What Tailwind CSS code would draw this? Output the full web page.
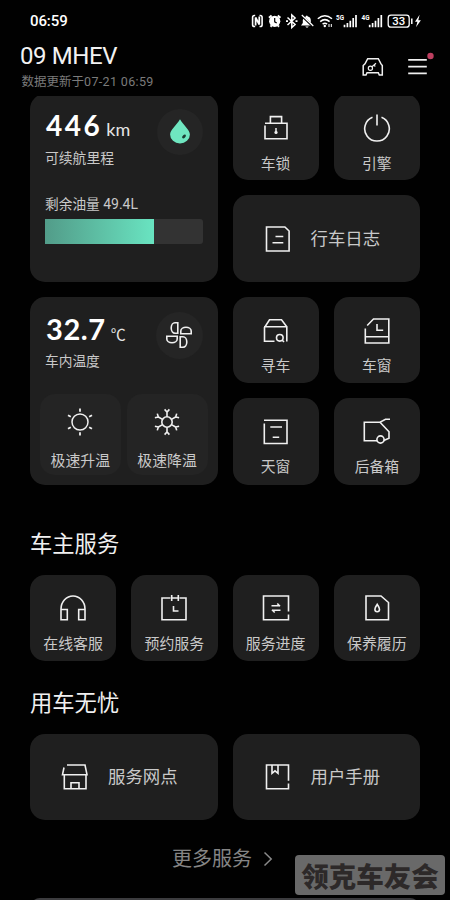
<!DOCTYPE html>
<html lang="zh-CN">
<head>
<meta charset="utf-8">
<meta name="viewport" content="width=device-width, initial-scale=1">
<title>09 MHEV</title>
<script src="https://cdn.jsdelivr.net/npm/@tailwindcss/browser@4"></script>
</head>
<body class="bg-black">
<div class="relative flex h-[900px] w-[450px] flex-col overflow-hidden bg-[#010101] font-[Roboto,'Noto_Sans_CJK_SC',sans-serif] text-[#c9c9c9]">

  <!-- status bar -->
  <div class="flex h-[42px] shrink-0 items-center justify-between pl-[30px] pr-[27px] text-white">
    <span class="text-[15px] font-medium leading-[42px] tracking-[-0.1px]">06:59</span>
    <svg class="h-[20px] w-[172px]" viewBox="252 11 172 20" fill="none" stroke="#fff">
      <!-- nfc -->
      <path d="M256.200 15.500h-.8q-1.800 0-1.800 1.800v7.400q0 1.800 1.800 1.800h.8M260.500 15.500h.8q1.800 0 1.800 1.800v7.400q0 1.800-1.800 1.800h-.8" stroke-width="1.600"/>
      <path d="M256.600 25.500V17.500l3.700 7V16.500" stroke-width="1.800"/>
      <!-- alarm -->
      <circle cx="275.700" cy="21.300" r="5.600" fill="#fff" stroke="none"/>
      <path d="M270 17.800l2.600-2.300M281.400 17.800l-2.600-2.300M271.500 26.800l1-1M280 26.800l-1-1" stroke-width="2"/>
      <path d="M275.700 18v3.800l2 1.200" stroke="#000" stroke-width="1.200"/>
      <!-- bluetooth -->
      <path d="M288.500 17.500l7.600 7-3.300 3V15l3.300 3-7.600 7" stroke-width="1.500"/>
      <path d="M287 21.200h2M296.500 21.200h2" stroke-width="1.700"/>
      <!-- muted bell -->
      <path d="M302 25.500l1.800-2.500v-3q.5-3 3-3.600 1-1.600 2 0 3 .6 3 4v2.600l2 2.500zM306.300 26.400h3.400q-1.500 2.400-3.400 0z" fill="#fff" stroke="none"/>
      <path d="M302.500 15.500l12 11.500" stroke="#000" stroke-width="2.400"/>
      <path d="M302.800 15l11.500 11" stroke-width="1.200"/>
      <!-- wifi -->
      <path d="M318.800 18.800q7-6.200 14.200 0M321.200 21.600q4.700-4 9.400 0M323.600 24.100q2.300-1.800 4.500 0" stroke-width="1.500"/>
      <circle cx="325.800" cy="26" r="1.200" fill="#fff" stroke="none"/>
      <path d="M330 24v3M332.300 24v3" stroke-width="1"/>
      <!-- signal bars -->
      <path d="M345.500 27.200v-2.400M348.400 27.200V23M351.300 27.200v-6.400M354.200 27.200v-9.200M357 27.200V15M370.700 27.200v-2.400M373.600 27.200V23M376.500 27.200v-6.400M379.400 27.200v-9.200M382.300 27.200V15" stroke-width="1.700"/>
      <text x="337" y="20" font-size="7" font-weight="700" fill="#fff" stroke="none" textLength="8" lengthAdjust="spacingAndGlyphs">5G</text>
      <text x="362.500" y="20" font-size="7" font-weight="700" fill="#fff" stroke="none" textLength="8" lengthAdjust="spacingAndGlyphs">4G</text>
      <!-- battery -->
      <rect x="389.200" y="15.200" width="21" height="12" rx="2.800" stroke-width="1.300"/>
      <path d="M412.800 18.500v5.500" stroke-width="1.500"/>
      <text x="393.200" y="25.100" font-size="11" font-weight="500" fill="#fff" stroke="none" textLength="13" lengthAdjust="spacingAndGlyphs">33</text>
      <path d="M420.600 14.800l-4.600 7h2.400l-1.400 5.500 4.900-7h-2.600z" fill="#fff" stroke="none"/>
    </svg>
  </div>

  <!-- vehicle header -->
  <header class="flex h-[54px] shrink-0 items-start justify-between pl-[20px] pr-[16px]">
    <div>
      <h1 class="text-[24px] font-normal leading-[28px] tracking-[-0.400px] text-[#f2f2f2]">09 MHEV</h1>
      <p class="pl-[1.500px] pt-[3px] text-[12.500px] leading-[18px] text-[#7b7b7b]">数据更新于<span class="tracking-[0.350px]">07-21 06:59</span></p>
    </div>
    <svg class="mt-[8px] h-[34px] w-[74px]" viewBox="360 50 74 34" fill="none" stroke="#f0f0f0" stroke-width="1.500">
      <path d="M363.200 75V65.500l1.800-1.600 2.700-5.200h10.600l2.700 5.200 1.300 1.600V75h-3l-1-2.200H367l-1 2.200z"/>
      <circle cx="370.400" cy="68.300" r="2.100" stroke-width="1.200"/>
      <path d="M372 66.800l4-3.600M374 65.200l1.300 1.300" stroke-width="1.200"/>
      <path d="M408.200 59.900h18.600M408.200 66.600h18.600M408.200 73.300h18.600" stroke-width="1.700"/>
      <circle cx="430.500" cy="56" r="3.200" fill="#bd3f60" stroke="none"/>
    </svg>
  </header>

  <main class="h-[804px] shrink-0 overflow-hidden px-[30px]">
    <!-- dashboard -->
    <section class="-mt-[2px] grid grid-cols-[187.500px_86.250px_86.250px] grid-rows-[86.400px_86.400px_86.400px_86.400px] gap-[15px]">
      <article class="row-span-2 rounded-[15px] bg-[#1f1f1f] px-[15px] pt-[15px]">
        <div class="flex justify-between">
          <div>
            <div class="flex items-baseline pl-px font-[Lato,sans-serif] leading-[33px] text-white"><span class="text-[28px] font-bold tracking-[2.500px]">446</span><span class="ml-[4px] text-[18px] text-[#e4e4e4]">km</span></div>
            <p class="mt-[2px] text-[13.800px] leading-[20px]">可续航里程</p>
          </div>
          <div class="flex size-[46px] items-center justify-center rounded-full bg-[#252525]">
            <svg class="size-[28px]" viewBox="0 0 28 28"><path d="M14 1.200C17.500 7 23.900 12 23.900 16.500A9.900 9 0 0 1 4.100 16.500C4.100 12 10.500 7 14 1.200z" fill="#6fe6c0"/><ellipse cx="18" cy="18.400" rx="2.300" ry="1.400" transform="rotate(-45 18 18.400)" fill="#1d3a31"/></svg>
          </div>
        </div>
        <p class="mt-[25px] text-[13.700px] leading-[22px]">剩余油量 <span class="text-[14px]">49.4L</span></p>
        <div class="mt-[4px] h-[25px] overflow-hidden rounded-r-[3px] bg-[#333]"><div class="h-full bg-linear-to-r from-[#529c89] to-[#69e4c1]" style="width:69%"></div></div>
      </article>

      <button class="flex flex-col items-center rounded-[15px] bg-[#1f1f1f] pt-[20px]">
        <svg class="size-[28px]" viewBox="0 0 28 28" fill="none" stroke="#f0f0f0" stroke-width="1.600"><path d="M3 9.200h22v15.600H3V11.500M8.400 9V2.600h11.200V9"/><path d="M14 14v3" stroke-width="1.500"/><circle cx="14" cy="18.400" r="1.600" fill="#f0f0f0" stroke="none"/></svg>
        <span class="mt-[10.500px] text-[14.800px] leading-[22px]">车锁</span>
      </button>
      <button class="flex flex-col items-center rounded-[15px] bg-[#1f1f1f] pt-[20px]">
        <svg class="size-[28px]" viewBox="0 0 28 28" fill="none" stroke="#f0f0f0" stroke-width="1.600"><path d="M9.500 3.300A12.300 12.300 0 1 0 18.500 3.300M14 .5v11"/></svg>
        <span class="mt-[10.500px] text-[14.800px] leading-[22px]">引擎</span>
      </button>
      <button class="col-span-2 flex items-center rounded-[15px] bg-[#1f1f1f] pl-[31px]">
        <svg class="size-[28px]" viewBox="0 0 28 28" fill="none" stroke="#f0f0f0" stroke-width="1.600"><path d="M2.500 2h18.400l4.200 4v20H2.500zM11.500 11.500h7.800M8.500 17.700h10.800"/></svg>
        <span class="ml-[19px] pt-px text-[17.400px] leading-[26px]">行车日志</span>
      </button>

      <article class="row-span-2 rounded-[15px] bg-[#1f1f1f] px-[10px] pt-[15px]">
        <div class="flex justify-between pl-[5px] pr-[5px]">
          <div>
            <div class="flex h-[36px] items-baseline pl-px leading-[34px] text-white"><span class="font-[Lato,sans-serif] text-[29px] font-bold tracking-[0.600px]">32.7</span><span class="ml-[5px] font-['Noto_Sans_CJK_SC',sans-serif] text-[15px] text-[#e4e4e4]">℃</span></div>
            <p class="mt-[3px] text-[13.700px] leading-[20px]">车内温度</p>
          </div>
          <div class="flex size-[47px] items-center justify-center rounded-full bg-[#252525]">
            <svg class="size-[28px]" viewBox="0 0 28 28" fill="none" stroke="#f0f0f0" stroke-width="1.600"><path d="M12.800 1.800v10.400H10A3.800 5.200 0 0 1 10 1.800zM26.200 12.700H15.800V10A5.200 3.700 0 0 1 26.200 10zM15.200 26.200V15.800H18A3.800 5.200 0 0 1 18 26.200zM1.800 15.200h10.400V18A5.200 3.700 0 0 1 1.800 18z"/></svg>
          </div>
        </div>
        <div class="mt-[23px] grid grid-cols-2 gap-[6px]">
          <button class="flex h-[81px] flex-col items-center rounded-[15px] bg-[#242424] pt-[14px]">
            <svg class="size-[28px]" viewBox="0 0 28 28" fill="none" stroke="#f0f0f0" stroke-width="1.500"><circle cx="14" cy="14" r="8"/><path d="M14 .5v3.200M14 24.300v3.200M2 7.200l2.800 1.600M23.200 19.200l2.800 1.600M2 20.800l2.800-1.600M23.200 8.800L26 7.200" stroke-width="1.800"/></svg>
            <span class="mt-[14px] whitespace-nowrap text-[14.900px] leading-[22px]">极速升温</span>
          </button>
          <button class="flex h-[81px] flex-col items-center rounded-[15px] bg-[#242424] pt-[14px]">
            <svg class="size-[28px]" viewBox="0 0 28 28" fill="none" stroke="#f0f0f0" stroke-width="1.600"><circle cx="14" cy="14" r="5.200"/><g id="arm"><path d="M14 8.800V3.600M11.600 1.400L14 4l2.400-2.600"/></g><use href="#arm" transform="rotate(60 14 14)"/><use href="#arm" transform="rotate(120 14 14)"/><use href="#arm" transform="rotate(180 14 14)"/><use href="#arm" transform="rotate(240 14 14)"/><use href="#arm" transform="rotate(300 14 14)"/></svg>
            <span class="mt-[14px] whitespace-nowrap text-[14.900px] leading-[22px]">极速降温</span>
          </button>
        </div>
      </article>

      <button class="flex flex-col items-center rounded-[15px] bg-[#1f1f1f] pt-[20px]">
        <svg class="size-[28px]" viewBox="0 0 28 28" fill="none" stroke="#f0f0f0" stroke-width="1.600"><path d="M12.500 24.300H2.500V10.500L7.500 2.800h12L24.800 9.800V24.500M2 9.800h23.500"/><circle cx="17.800" cy="20.800" r="3.300"/><path d="M20 23l2 2"/></svg>
        <span class="mt-[10px] text-[14.800px] leading-[22px]">寻车</span>
      </button>
      <button class="flex flex-col items-center rounded-[15px] bg-[#1f1f1f] pt-[20px]">
        <svg class="size-[28px]" viewBox="0 0 28 28" fill="none" stroke="#f0f0f0" stroke-width="1.600"><path d="M4.200 8.500L10.500 2h15.300v24H2.300V11.500M2.300 19.800h23.500M14 7v6.200h6.200"/></svg>
        <span class="mt-[10px] text-[14.800px] leading-[22px]">车窗</span>
      </button>
      <button class="flex flex-col items-center rounded-[15px] bg-[#1f1f1f] pt-[20px]">
        <svg class="size-[28px]" viewBox="0 0 28 28" fill="none" stroke="#f0f0f0" stroke-width="1.600"><path d="M2 2.300h23v23.200H2.300V5.500M8.300 9H20M10.700 19.300h6.500"/></svg>
        <span class="mt-[10px] text-[14.800px] leading-[22px]">天窗</span>
      </button>
      <button class="flex flex-col items-center rounded-[15px] bg-[#1f1f1f] pt-[20px]">
        <svg class="size-[28px]" viewBox="0 0 28 28" fill="none" stroke="#f0f0f0" stroke-width="1.600"><path d="M27 1.300h-4.500L17 4.200H1.300v18.600H14M17 4.200l9 9.500v6.500l-5.200 2.300"/><circle cx="17.500" cy="21.500" r="3.600"/></svg>
        <span class="mt-[10px] text-[14.800px] leading-[22px]">后备箱</span>
      </button>
    </section>

    <!-- owner services -->
    <h2 class="mt-[43px] text-[22.300px] font-normal leading-[32px] text-[#f0f0f0]">车主服务</h2>
    <section class="mt-[15.500px] grid grid-cols-4 gap-[15px]">
      <button class="flex h-[86px] flex-col items-center rounded-[15px] bg-[#1f1f1f] pt-[19px]">
        <svg class="size-[28px]" viewBox="0 0 28 28" fill="none" stroke="#f0f0f0" stroke-width="1.600"><path d="M2 16v-1a12 13 0 0 1 24 0v1M2 15.500h6.300v10.200H2zM19.700 15.500H26v10.200h-6.300z"/></svg>
        <span class="mt-[11px] text-[14.900px] leading-[22px]">在线客服</span>
      </button>
      <button class="flex h-[86px] flex-col items-center rounded-[15px] bg-[#1f1f1f] pt-[19px]">
        <svg class="size-[28px]" viewBox="0 0 28 28" fill="none" stroke="#f0f0f0" stroke-width="1.600"><path d="M10.500 4H2v21.700h24V4h-6.500M11.700 1v6M18.300 1v6M12 4h6M13.500 12v5h5"/></svg>
        <span class="mt-[11px] text-[14.900px] leading-[22px]">预约服务</span>
      </button>
      <button class="flex h-[86px] flex-col items-center rounded-[15px] bg-[#1f1f1f] pt-[19px]">
        <svg class="size-[28px]" viewBox="0 0 28 28" fill="none" stroke="#f0f0f0" stroke-width="1.600"><path d="M26.500 17.500V2H1.500v23.700h25V20.500M9.500 11.800h8.500M18 12.300l-2.700-2.800M10 16.200h8.500M10 15.700l2.700 2.800"/></svg>
        <span class="mt-[11px] text-[14.900px] leading-[22px]">服务进度</span>
      </button>
      <button class="flex h-[86px] flex-col items-center rounded-[15px] bg-[#1f1f1f] pt-[19px]">
        <svg class="size-[28px]" viewBox="0 0 28 28" fill="none" stroke="#f0f0f0" stroke-width="1.600"><path d="M3 2h15l7.500 6.500v17.200H3zM14.200 10.300c1 1.700 2.300 3.200 2.300 4.900a2.300 2.500 0 0 1-4.600 0c0-1.700 1.300-3.200 2.300-4.900z"/></svg>
        <span class="mt-[11px] text-[14.900px] leading-[22px]">保养履历</span>
      </button>
    </section>

    <!-- worry-free driving -->
    <h2 class="mt-[25.500px] text-[22.300px] font-normal leading-[32px] text-[#f0f0f0]">用车无忧</h2>
    <section class="mt-[15.500px] grid grid-cols-2 gap-[15px]">
      <button class="flex h-[86px] items-center rounded-[15px] bg-[#1f1f1f] pl-[31px]">
        <svg class="size-[28px]" viewBox="0 0 28 28" fill="none" stroke="#f0f0f0" stroke-width="1.600"><path d="M6 2h18l2 9.700H1.500L3 4.500M3.300 12v13.800H25V12M10 25.500v-5.700h8v5.700"/></svg>
        <span class="ml-[19px] text-[17.400px] leading-[26px]">服务网点</span>
      </button>
      <button class="flex h-[86px] items-center rounded-[15px] bg-[#1f1f1f] pl-[31px]">
        <svg class="size-[28px]" viewBox="0 0 28 28" fill="none" stroke="#f0f0f0" stroke-width="1.600"><path d="M24.500 17.800V2h-22v23.800h22V20.500M8 2v8.300l3-2.500 3 2.500V2"/></svg>
        <span class="ml-[19px] text-[17.400px] leading-[26px]">用户手册</span>
      </button>
    </section>

    <div class="mt-[25px] flex h-[28px] items-center pl-[142px] text-[#858585]">
      <span class="text-[20px] leading-[28px]">更多服务</span>
      <svg class="ml-[11px] h-[16px] w-[10px]" viewBox="0 0 10 16" fill="none" stroke="#8a8a8a" stroke-width="1.500"><path d="M1.500 1.500L8.200 8l-6.700 6.500"/></svg>
    </div>
    <div class="mt-[25px] h-[20px] rounded-[15px] bg-[#3c3c3f]"></div>
  </main>

  <!-- watermark -->
  <div class="absolute left-[295px] top-[855px] flex h-[40px] w-[150px] items-center justify-center rounded-[4px] bg-[#696969] font-['Noto_Sans_CJK_SC',sans-serif] text-[27.500px] font-black leading-[40px] text-[#2d2929]">领克车友会</div>
</div>
</body>
</html>
